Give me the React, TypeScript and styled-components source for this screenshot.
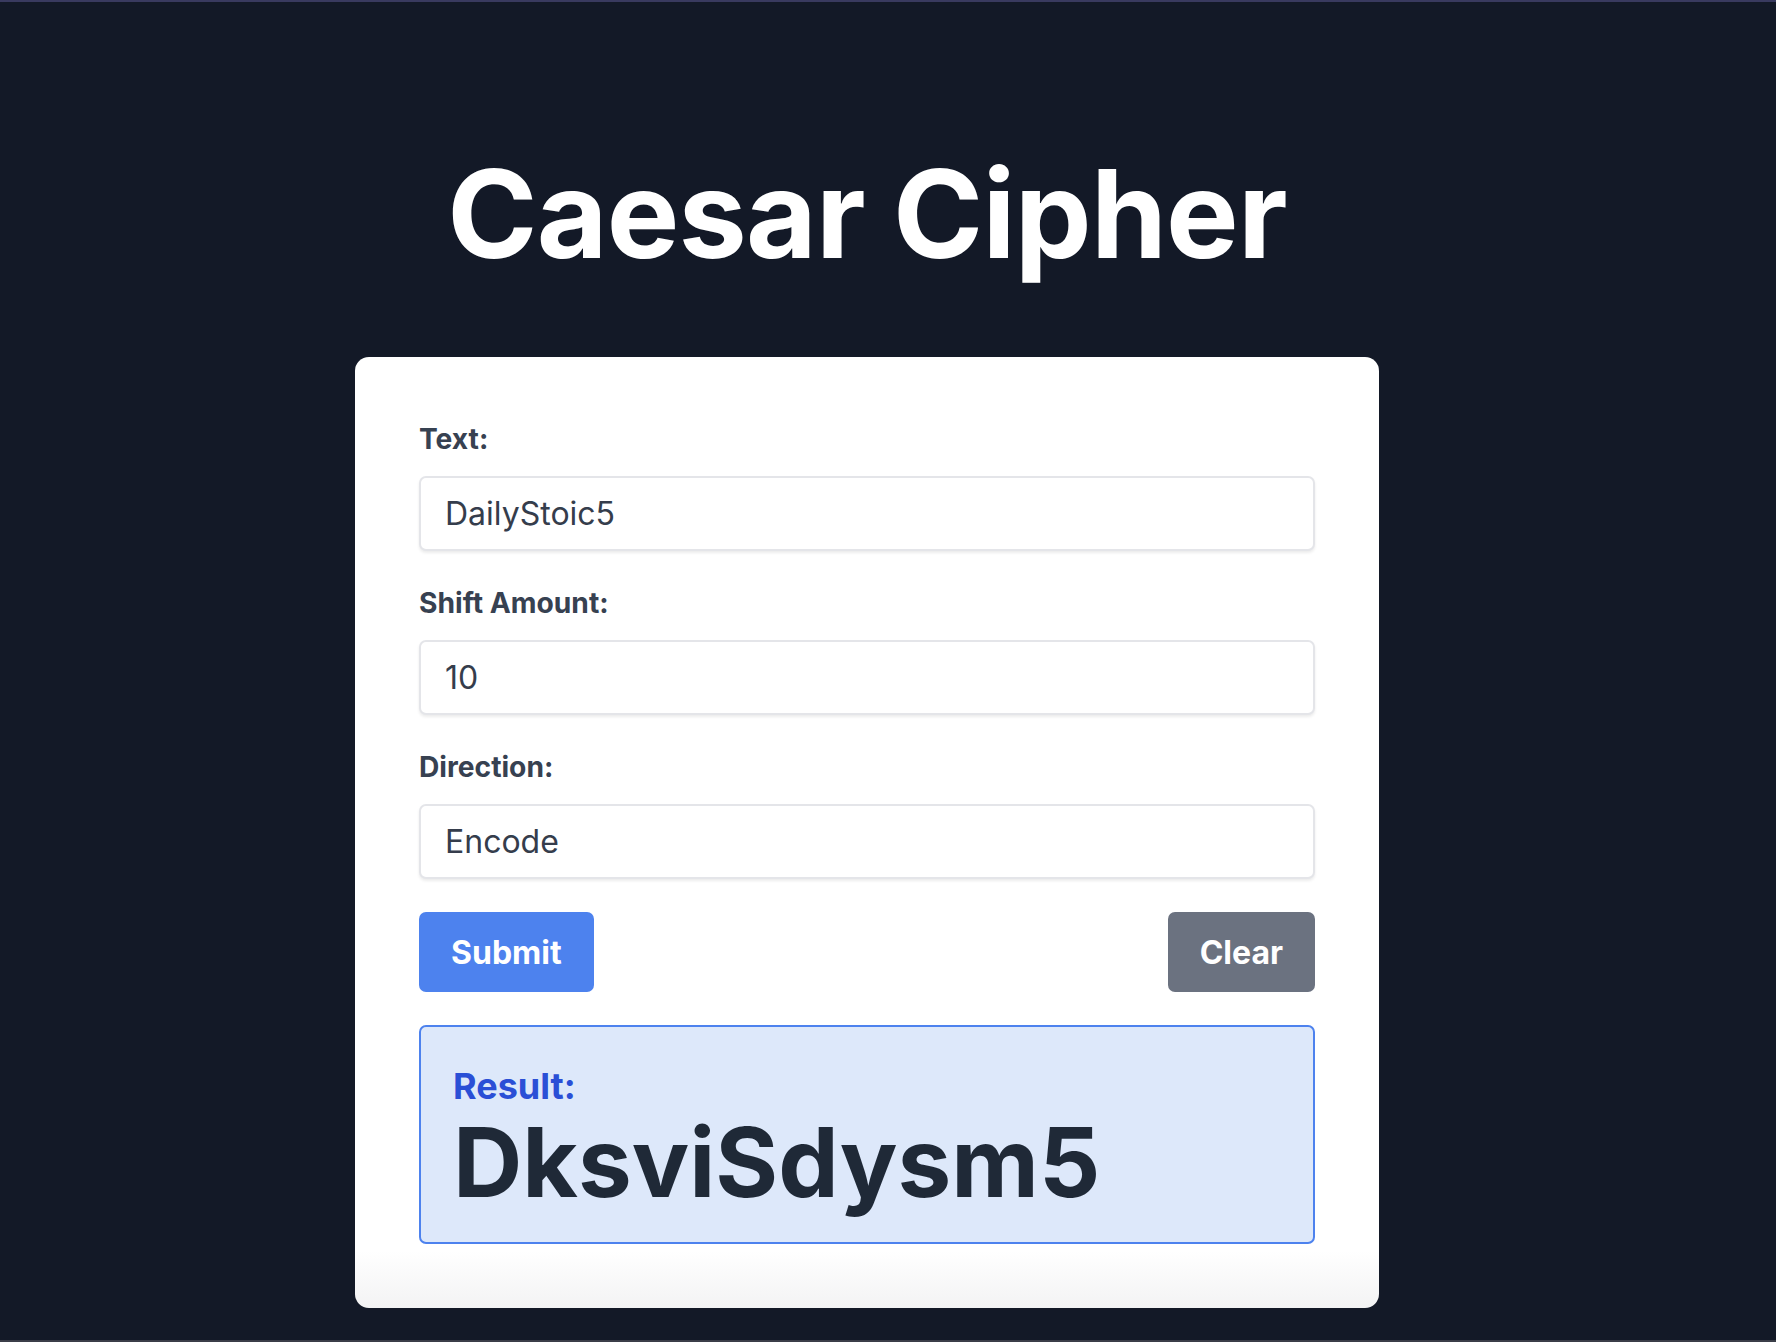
import React, { useState } from "react";
import styled, { createGlobalStyle } from "styled-components";

const GlobalStyle = createGlobalStyle`
  html, body {
    margin: 0;
    padding: 0;
    background: #131927;
  }
  body {
    font-family: Inter, "Noto Sans", "Liberation Sans", sans-serif;
  }
  * { box-sizing: border-box; }
`;

const Page = styled.div`
  min-height: 100vh;
  border-top: 2px solid #393a5f;
  border-bottom: 2px solid #3b3e48;
  display: flex;
  flex-direction: column;
  align-items: center;
  padding: 151px 42px 30px 0;
`;

const Title = styled.h1`
  margin: 0 0 82px;
  font-size: 122px;
  line-height: 1;
  font-weight: 700;
  color: #ffffff;
  letter-spacing: -0.8px;
`;

const Card = styled.form`
  width: 1024px;
  padding: 64px;
  border-radius: 14px;
  background: linear-gradient(to bottom, #ffffff 0%, #ffffff 94%, #f3f3f4 100%);
  display: flex;
  flex-direction: column;
`;

const Field = styled.div`
  display: flex;
  flex-direction: column;
  gap: 18px;
  margin-bottom: 34px;
`;

const Label = styled.label`
  font-size: 28.2px;
  line-height: 37px;
  font-weight: 700;
  color: #374151;
`;

const inputStyles = `
  width: 100%;
  height: 75px;
  padding: 0 24px;
  border: 2px solid #e4e5e9;
  border-radius: 7px;
  background: #ffffff;
  box-shadow: 0 2px 3px rgba(0, 0, 0, 0.08);
  font-family: Inter, "Noto Sans", "Liberation Sans", sans-serif;
  font-size: 32px;
  color: #353d4c;
  outline: none;
`;

const TextInput = styled.input`
  ${inputStyles}
`;

const Select = styled.select`
  ${inputStyles}
  appearance: none;
  -webkit-appearance: none;
`;

const ButtonRow = styled.div`
  display: flex;
  justify-content: space-between;
  align-items: center;
  margin-top: -1px;
  margin-bottom: 33px;
`;

const Button = styled.button<{ $variant: "primary" | "secondary" }>`
  height: 80px;
  padding: 0 32px;
  border: none;
  border-radius: 7px;
  background: ${(p) => (p.$variant === "primary" ? "#4d82ee" : "#6b7280")};
  color: #ffffff;
  font-family: Inter, "Noto Sans", "Liberation Sans", sans-serif;
  font-size: 32px;
  font-weight: 700;
  cursor: pointer;
`;

const ResultBox = styled.div`
  border: 2px solid #4d82ee;
  border-radius: 7px;
  background: #dde8fa;
  padding: 41px 32px 22px;
  display: flex;
  flex-direction: column;
  gap: 0;
`;

const ResultLabel = styled.div`
  font-size: 36px;
  line-height: 36px;
  font-weight: 700;
  color: #2a4fd6;
`;

const ResultValue = styled.div`
  font-size: 96px;
  line-height: 116px;
  font-weight: 700;
  color: #1f2937;
`;

function shift(text: string, amount: number, decode: boolean): string {
  const n = ((decode ? -amount : amount) % 26 + 26) % 26;
  return text.replace(/[a-z]/g, (c) =>
    String.fromCharCode(((c.charCodeAt(0) - 97 + n) % 26) + 97)
  );
}

export default function App() {
  const [text, setText] = useState("DailyStoic5");
  const [amount, setAmount] = useState("10");
  const [direction, setDirection] = useState("encode");
  const [result, setResult] = useState(shift("DailyStoic5", 10, false));

  return (
    <>
      <GlobalStyle />
      <Page>
        <Title>Caesar Cipher</Title>
        <Card
          onSubmit={(e) => {
            e.preventDefault();
            setResult(shift(text, parseInt(amount || "0", 10), direction === "decode"));
          }}
        >
          <Field>
            <Label htmlFor="text">Text:</Label>
            <TextInput id="text" value={text} onChange={(e) => setText(e.target.value)} />
          </Field>
          <Field>
            <Label htmlFor="shift">Shift Amount:</Label>
            <TextInput id="shift" value={amount} onChange={(e) => setAmount(e.target.value)} />
          </Field>
          <Field>
            <Label htmlFor="direction">Direction:</Label>
            <Select id="direction" value={direction} onChange={(e) => setDirection(e.target.value)}>
              <option value="encode">Encode</option>
              <option value="decode">Decode</option>
            </Select>
          </Field>
          <ButtonRow>
            <Button type="submit" $variant="primary">Submit</Button>
            <Button
              type="button"
              $variant="secondary"
              onClick={() => {
                setText("");
                setAmount("");
                setResult("");
              }}
            >
              Clear
            </Button>
          </ButtonRow>
          <ResultBox>
            <ResultLabel>Result:</ResultLabel>
            <ResultValue>{result}</ResultValue>
          </ResultBox>
        </Card>
      </Page>
    </>
  );
}
